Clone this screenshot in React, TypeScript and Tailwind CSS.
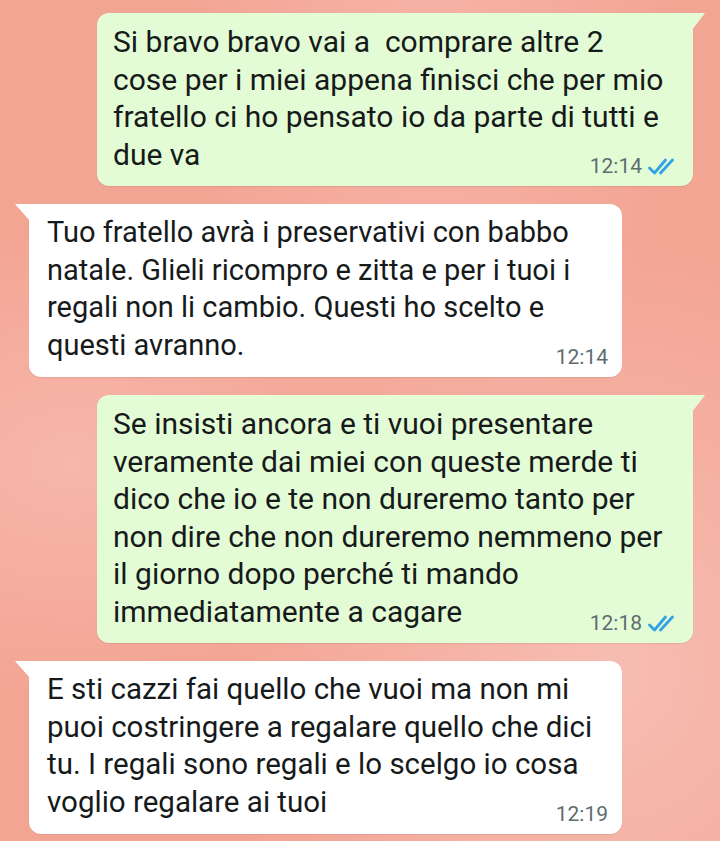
import React from "react";

type Msg = {
  lines: string[];
  time: string;
  mine: boolean;
  size: string;
};

const messages: Msg[] = [
  {
    lines: [
      "Si bravo bravo vai a  comprare altre 2",
      "cose per i miei appena finisci che per mio",
      "fratello ci ho pensato io da parte di tutti e",
      "due va",
    ],
    time: "12:14",
    mine: true,
    size: "text-[30px]",
  },
  {
    lines: [
      "Tuo fratello avrà i preservativi con babbo",
      "natale. Glieli ricompro e zitta e per i tuoi i",
      "regali non li cambio. Questi ho scelto e",
      "questi avranno.",
    ],
    time: "12:14",
    mine: false,
    size: "text-[29px]",
  },
  {
    lines: [
      "Se insisti ancora e ti vuoi presentare",
      "veramente dai miei con queste merde ti",
      "dico che io e te non dureremo tanto per",
      "non dire che non dureremo nemmeno per",
      "il giorno dopo perché ti mando",
      "immediatamente a cagare",
    ],
    time: "12:18",
    mine: true,
    size: "text-[30px]",
  },
  {
    lines: [
      "E sti cazzi fai quello che vuoi ma non mi",
      "puoi costringere a regalare quello che dici",
      "tu. I regali sono regali e lo scelgo io cosa",
      "voglio regalare ai tuoi",
    ],
    time: "12:19",
    mine: false,
    size: "text-[29.5px]",
  },
];

const DoubleTick = () => (
  <svg width="33" height="19" viewBox="0 0 33 19" fill="none" className="mb-[1px]">
    <path d="M2.5 11 L7.5 16 L18.5 3" stroke="#2fa3e4" strokeWidth="2.8" strokeLinecap="round" strokeLinejoin="round" />
    <path d="M13.5 16 L25.5 3" stroke="#2fa3e4" strokeWidth="2.8" strokeLinecap="round" />
  </svg>
);

const Bubble = ({ msg }: { msg: Msg }) => {
  const body = msg.mine
    ? "self-end mr-[27px] w-[596px] bg-[#e4fcd5] rounded-l-[12px] rounded-br-[12px] pl-4 pr-[13px]"
    : "self-start ml-[29px] w-[593px] bg-white rounded-r-[12px] rounded-bl-[12px] pl-[18px] pr-[14px]";
  const last = msg.lines.length - 1;

  return (
    <div className={`relative pt-[10px] pb-[13px] shadow-[0_1px_1px_rgba(0,0,0,0.08)] ${body}`}>
      {/* coda del fumetto */}
      <div
        className={
          msg.mine
            ? "absolute -right-[12px] top-0 w-[13px] h-[17px] bg-[#e4fcd5] [clip-path:polygon(0_0,100%_0,0_100%)]"
            : "absolute -left-[14px] top-0 w-[15px] h-[17px] bg-white [clip-path:polygon(0_0,100%_0,100%_100%)]"
        }
      />
      <div className={`${msg.size} leading-[37.5px] text-[#161a1b]`}>
        {msg.lines.map((line, i) => (
          <div key={i} className="flex items-end justify-between">
            <span className="whitespace-pre">{line}</span>
            {i === last && (
              <span className="flex items-end gap-[5px] translate-y-[4px]">
                <span className="text-[21px] leading-[22px] text-[#5e6c71]">{msg.time}</span>
                {msg.mine && <DoubleTick />}
              </span>
            )}
          </div>
        ))}
      </div>
    </div>
  );
};

export default function App() {
  return (
    <main
      className="w-[720px] h-[841px] overflow-hidden flex flex-col gap-[18px] pt-[13px] bg-[#f3a594] bg-[radial-gradient(ellipse_at_85%_80%,#f7bdb2_0%,transparent_45%),radial-gradient(ellipse_at_10%_55%,#f7b7aa_0%,transparent_35%),radial-gradient(ellipse_at_60%_5%,#f6b3a6_0%,transparent_40%)]"
      style={{ fontFamily: "Roboto, 'Noto Sans', sans-serif" }}
    >
      {messages.map((m, i) => (
        <Bubble key={i} msg={m} />
      ))}
    </main>
  );
}
